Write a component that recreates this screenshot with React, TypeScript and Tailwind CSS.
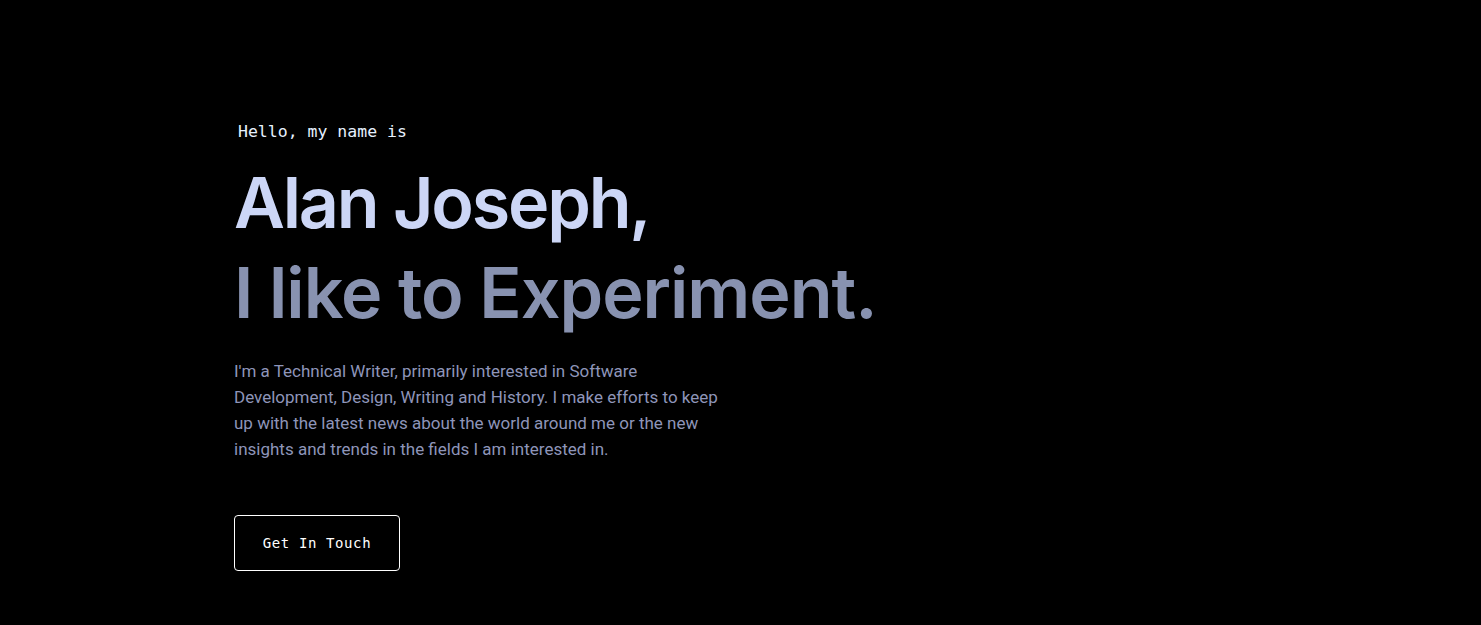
export default function App() {
  return (
    <div className="min-h-[625px] w-full bg-black">
      <section className="flex flex-col items-start pl-[234px] pt-[122px]">
        <h1 className="ml-1 mb-[16px] font-['DejaVu_Sans_Mono',monospace] text-[16.5px] leading-[20px] text-[#e6f1ff]">
          Hello, my name is
        </h1>
        <h2 className="font-['Inter',sans-serif] text-[70px] font-semibold leading-[90px] tracking-[-2.2px] text-[#ccd6f6]">
          Alan Joseph,
        </h2>
        <h3 className="font-['Inter',sans-serif] text-[70px] font-semibold leading-[90px] tracking-[-1px] text-[#8892b0]">
          I like to Experiment.
        </h3>
        <p className="mt-[20px] max-w-[495px] font-['Roboto',sans-serif] text-[17px] leading-[26px] text-[#8e95b9]">
          I&apos;m a Technical Writer, primarily interested in Software Development, Design, Writing and History. I make
          efforts to keep up with the latest news about the world around me or the new insights and trends in the fields
          I am interested in.
        </p>
        <a
          href="#contact"
          className="mt-[53px] flex h-[56px] w-[166px] items-center justify-center rounded-[4px] border border-white font-['DejaVu_Sans_Mono',monospace] text-[14px] tracking-[0.6px] text-white"
        >
          Get In Touch
        </a>
      </section>
    </div>
  )
}
